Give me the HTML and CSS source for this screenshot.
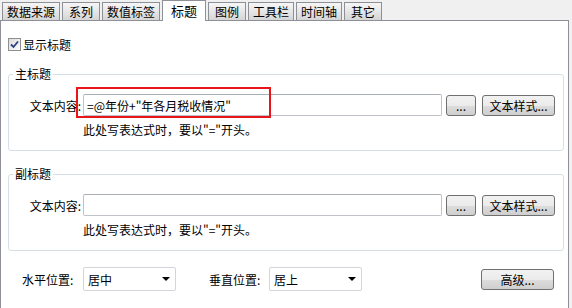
FILE: index.html
```html
<!DOCTYPE html>
<html lang="zh-CN">
<head>
    <meta charset="UTF-8">
    <title>标题设置</title>
    <link rel="stylesheet" href="styles.css">
</head>
<body>
<div class="tabs">
    <div class="tab">数据来源</div>
    <div class="tab">系列</div>
    <div class="tab">数值标签</div>
    <div class="tab active">标题</div>
    <div class="tab">图例</div>
    <div class="tab">工具栏</div>
    <div class="tab">时间轴</div>
    <div class="tab">其它</div>
</div>
<div class="panel">
    <label class="check-row">
        <span class="check">
            <svg width="9" height="9" viewBox="0 0 9 9"><path d="M1 4.5 L3.5 7 L8 1.5" fill="none" stroke="#2b3f86" stroke-width="1.8"/></svg>
        </span>
        显示标题
    </label>

    <fieldset class="group">
        <legend>主标题</legend>
        <div class="row">
            <span class="lbl">文本内容:</span>
            <input class="txt" type="text" value='=@年份+"年各月税收情况"'>
            <button class="btn dots">...</button>
            <button class="btn style">文本样式...</button>
            <!--红框标注-->
            <div class="mark"></div>
        </div>
        <div class="hint">此处写表达式时，要以"="开头。</div>
    </fieldset>

    <fieldset class="group">
        <legend>副标题</legend>
        <div class="row">
            <span class="lbl">文本内容:</span>
            <input class="txt" type="text" value="">
            <button class="btn dots">...</button>
            <button class="btn style">文本样式...</button>
        </div>
        <div class="hint">此处写表达式时，要以"="开头。</div>
    </fieldset>

    <div class="pos-row">
        <span class="pos-lbl">水平位置:</span>
        <div class="sel">居中<i class="arrow"></i></div>
        <span class="pos-lbl second">垂直位置:</span>
        <div class="sel">居上<i class="arrow"></i></div>
        <button class="btn adv">高级...</button>
    </div>
</div>
</body>
</html>
```
FILE: styles.css
```css
*{
    box-sizing: border-box;
}
body{
    margin: 0;
    background: #f0f0f0;
    font-family: "Noto Sans CJK SC", "Liberation Sans", sans-serif;
    font-size: 12px;
    color: #000;
}
/*顶部选项卡*/
.tabs{
    display: flex;
    align-items: flex-end;
    height: 20px;
    padding-left: 2px;
}
.tab{
    height: 18px;
    min-width: 38px;
    margin-right: 2px;
    padding: 0 4px;
    border: 1px solid #8d9096;
    border-bottom: none;
    background: linear-gradient(to bottom, #f6f6f6, #e6e6e6 50%, #d5d5d5);
    line-height: 17px;
    text-align: center;
}
.tab.active{
    position: relative;
    z-index: 1;
    height: 21px;
    width: 44px;
    margin-bottom: -1px;
    background: #fff;
    line-height: 20px;
    font-size: 13px;
}
.panel{
    width: 569px;
    height: 288px;
    border: 1px solid #8d9096;
    border-bottom: none;
    background: #fff;
}
.check-row{
    display: flex;
    align-items: center;
    height: 13px;
    margin: 17px 0 0 7px;
    line-height: 13px;
}
.check{
    display: flex;
    align-items: center;
    justify-content: center;
    width: 13px;
    height: 13px;
    margin-right: 2px;
    border: 1px solid #8e8f8f;
    background: linear-gradient(135deg, #dcdcdc, #fdfdfd);
}
/*分组框*/
.group{
    width: 556px;
    margin: 16px 0 0 7px;
    padding: 13px 0 13px 0;
    border: 1px solid #d5dfe5;
    border-radius: 3px;
}
.group legend{
    margin-left: 4px;
    padding: 0 2px;
    line-height: 14px;
}
.row{
    position: relative;
    display: flex;
    align-items: center;
    height: 22px;
}
.lbl{
    width: 72px;
    margin-right: 2px;
    text-align: right;
}
.txt{
    width: 359px;
    height: 22px;
    margin: 0;
    padding: 0 3px;
    border: 1px solid #bfc3c9;
    border-top-color: #a9adb4;
    border-radius: 2px;
    font-family: inherit;
    font-size: 12px;
    outline: none;
}
.btn{
    height: 21px;
    padding: 0;
    border: 1px solid #707070;
    border-radius: 3px;
    background: linear-gradient(to bottom, #f2f2f2, #ebebeb 50%, #dddddd 51%, #cfcfcf);
    font-family: inherit;
    font-size: 12px;
    color: #000;
    line-height: 19px;
}
.dots{
    width: 30px;
    margin-left: 4px;
}
.style{
    width: 73px;
    margin-left: 6px;
}
.mark{
    position: absolute;
    left: 67px;
    top: -7px;
    width: 195px;
    height: 31px;
    border: 2px solid #e8151b;
}
.hint{
    margin: 7px 0 0 74px;
    line-height: 14px;
}
/*底部位置选择*/
.pos-row{
    display: flex;
    align-items: center;
    height: 24px;
    margin-top: 16px;
    padding-left: 21px;
}
.pos-lbl{
    width: 61px;
}
.pos-lbl.second{
    margin-left: 33px;
    width: 60px;
}
.sel{
    display: flex;
    align-items: center;
    justify-content: space-between;
    width: 93px;
    height: 24px;
    padding: 0 5px 0 4px;
    border: 1px solid #d2d5da;
    border-radius: 2px;
}
.arrow{
    width: 0;
    height: 0;
    border-left: 4px solid transparent;
    border-right: 4px solid transparent;
    border-top: 4px solid #000;
}
.adv{
    width: 73px;
    margin-left: auto;
    margin-right: 14px;
}
```
